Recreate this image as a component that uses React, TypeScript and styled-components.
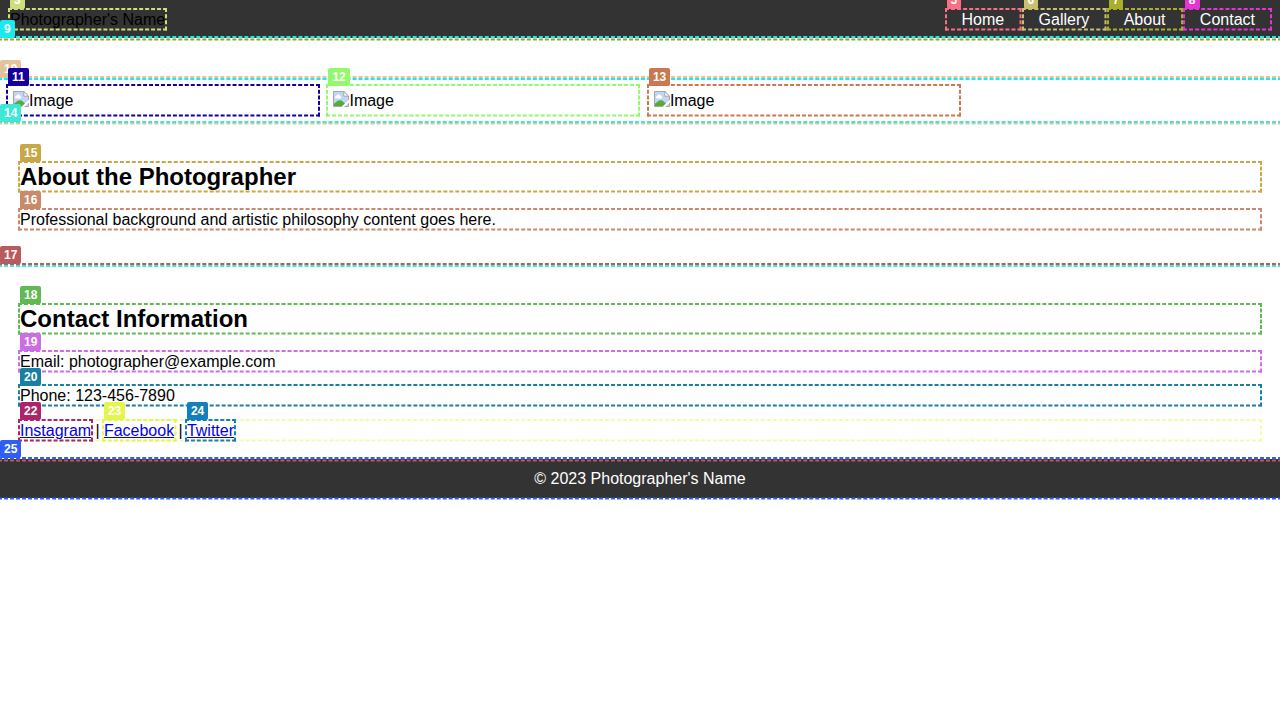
import React from "react";
import styled, { createGlobalStyle, css } from "styled-components";

const GlobalStyle = createGlobalStyle`
  body {
    margin: 0;
    background: #fff;
    color: #000;
    font: 16px/16.4px "Liberation Sans", Arial, sans-serif;
  }
`;

type Mark = { $mark: string };

/* Dashed frame drawn just outside the element, at half scale for fine dashes. */
const framed = css<Mark>`
  position: relative;
  &::before {
    content: "";
    position: absolute;
    z-index: 1;
    top: -2px;
    left: -2px;
    box-sizing: border-box;
    width: calc(200% + 8px);
    height: calc(200% + 8px);
    border: 4px dashed ${(p) => p.$mark};
    transform: scale(0.5);
    transform-origin: 0 0;
    pointer-events: none;
  }
`;

const Page = styled.div`
  overflow: hidden;
  padding-bottom: 4px;
`;

const Tag = styled.span<{ $color: string }>`
  position: absolute;
  z-index: 2;
  top: -18.8px;
  left: 0;
  padding: 2px 4px;
  border-radius: 2px;
  background: ${(p) => p.$color};
  color: #fff;
  font-size: 12px;
  font-weight: bold;
  line-height: 14px;
  white-space: nowrap;
`;

const Header = styled.header<Mark>`
  ${framed}
  display: flex;
  justify-content: space-between;
  padding: 10px;
  background: #333;
`;

const Brand = styled.div<Mark>`
  ${framed}
  padding-top: 2px;
`;

const Nav = styled.nav`
  display: flex;
  gap: 4.4px;
`;

const NavLink = styled.a<Mark>`
  ${framed}
  padding: 2px 15px 0;
  color: #fff;
  text-decoration: none;
`;

const Hero = styled.section<Mark>`
  ${framed}
  padding: 20px;
`;

const Gallery = styled.section<Mark>`
  ${framed}
  display: flex;
  gap: 10.45px;
  padding: 8px;
`;

const Photo = styled.div<Mark>`
  ${framed}
  display: flex;
  align-items: flex-start;
  width: 300px;
  padding: 5px;
`;

const AltText = styled.span`
  padding-top: 2px;
`;

const Section = styled.section<Mark>`
  ${framed}
  padding: 20px;
`;

const Heading = styled.h2<Mark>`
  ${framed}
  margin: 19.92px 0;
  font-size: 24px;
  line-height: 27.6px;
`;

const Paragraph = styled.p<Mark>`
  ${framed}
  margin: 16px 0;
  padding-top: 2px;
`;

const Socials = styled.div<Mark>`
  ${framed}
  word-spacing: -0.15px;
`;

const SocialLink = styled.a<Mark>`
  ${framed}
  display: inline-block;
  padding-top: 2px;
  color: #0000ee;
  text-decoration: underline;
`;

const Footer = styled.footer<Mark>`
  ${framed}
  padding: 12px 10px 10px;
  background: #333;
  color: #fff;
  text-align: center;
`;

const Label = ({ n, color }: { n: number; color: string }) => <Tag $color={color}>{n}</Tag>;

const MissingImage = () => (
  <svg width="16" height="16" viewBox="0 0 16 16">
    <path d="M.5.5h10.3l4.7 4.7v10.3H.5z" fill="#c3d4f5" stroke="#a6a6a6" />
    <path d="M2.3 7.5a1.7 1.7 0 0 1 1.2-2.7 2 2 0 0 1 3.8.4 1.3 1.3 0 0 1 .4 2.3z" fill="#fff" />
    <path d="M1 15v-2.3C3.5 10.5 5.8 8.5 8.5 9.5L12 12.5 9.5 15z" fill="#54ab3a" />
    <path d="M10.8.5v4.7h4.7z" fill="#fff" stroke="#a6a6a6" />
    <path d="M16 8.5L8.5 16H11l5-4.5z" fill="#fff" />
  </svg>
);

const links = [
  { n: 5, text: "Home", color: "#fa6e86" },
  { n: 6, text: "Gallery", color: "#cbc06f" },
  { n: 7, text: "About", color: "#a9af26" },
  { n: 8, text: "Contact", color: "#e435d3" },
];

const photos = [
  { n: 11, color: "#15009f" },
  { n: 12, color: "#92f86c" },
  { n: 13, color: "#cb7850" },
];

export default function App() {
  return (
    <Page>
      <GlobalStyle />
      <Header $mark="#8fa52c">
        <Brand $mark="#cddf7b">
          <Label n={3} color="#cddf7b" />
          Photographer's Name
        </Brand>
        <Nav>
          {links.map((l) => (
            <NavLink key={l.n} $mark={l.color}>
              <Label n={l.n} color={l.color} />
              {l.text}
            </NavLink>
          ))}
        </Nav>
      </Header>
      <Hero $mark="#19eaf0">
        <Label n={9} color="#19eaf0" />
      </Hero>
      <Gallery $mark="#e0c49c">
        <Label n={10} color="#e0c49c" />
        {photos.map((p) => (
          <Photo key={p.n} $mark={p.color}>
            <Label n={p.n} color={p.color} />
            <MissingImage />
            <AltText>Image</AltText>
          </Photo>
        ))}
      </Gallery>
      <Section $mark="#3de8d5">
        <Label n={14} color="#3de8d5" />
        <Heading $mark="#c9a646">
          <Label n={15} color="#c9a646" />
          About the Photographer
        </Heading>
        <Paragraph $mark="#c88a6a">
          <Label n={16} color="#c88a6a" />
          Professional background and artistic philosophy content goes here.
        </Paragraph>
      </Section>
      <Section $mark="#b95a5e">
        <Label n={17} color="#b95a5e" />
        <Heading $mark="#60b953">
          <Label n={18} color="#60b953" />
          Contact Information
        </Heading>
        <Paragraph $mark="#cd6ce7">
          <Label n={19} color="#cd6ce7" />
          Email: photographer@example.com
        </Paragraph>
        <Paragraph $mark="#187fa5">
          <Label n={20} color="#187fa5" />
          Phone: 123-456-7890
        </Paragraph>
        <Socials $mark="#f5f9b2">
          <SocialLink $mark="#ae246a">
            <Label n={22} color="#ae246a" />
            Instagram
          </SocialLink>
          {" | "}
          <SocialLink $mark="#e4f64b">
            <Label n={23} color="#e4f64b" />
            Facebook
          </SocialLink>
          {" | "}
          <SocialLink $mark="#1380bd">
            <Label n={24} color="#1380bd" />
            Twitter
          </SocialLink>
        </Socials>
      </Section>
      <Footer $mark="#2d5dfb">
        <Label n={25} color="#2d5dfb" />
        © 2023 Photographer's Name
      </Footer>
    </Page>
  );
}
